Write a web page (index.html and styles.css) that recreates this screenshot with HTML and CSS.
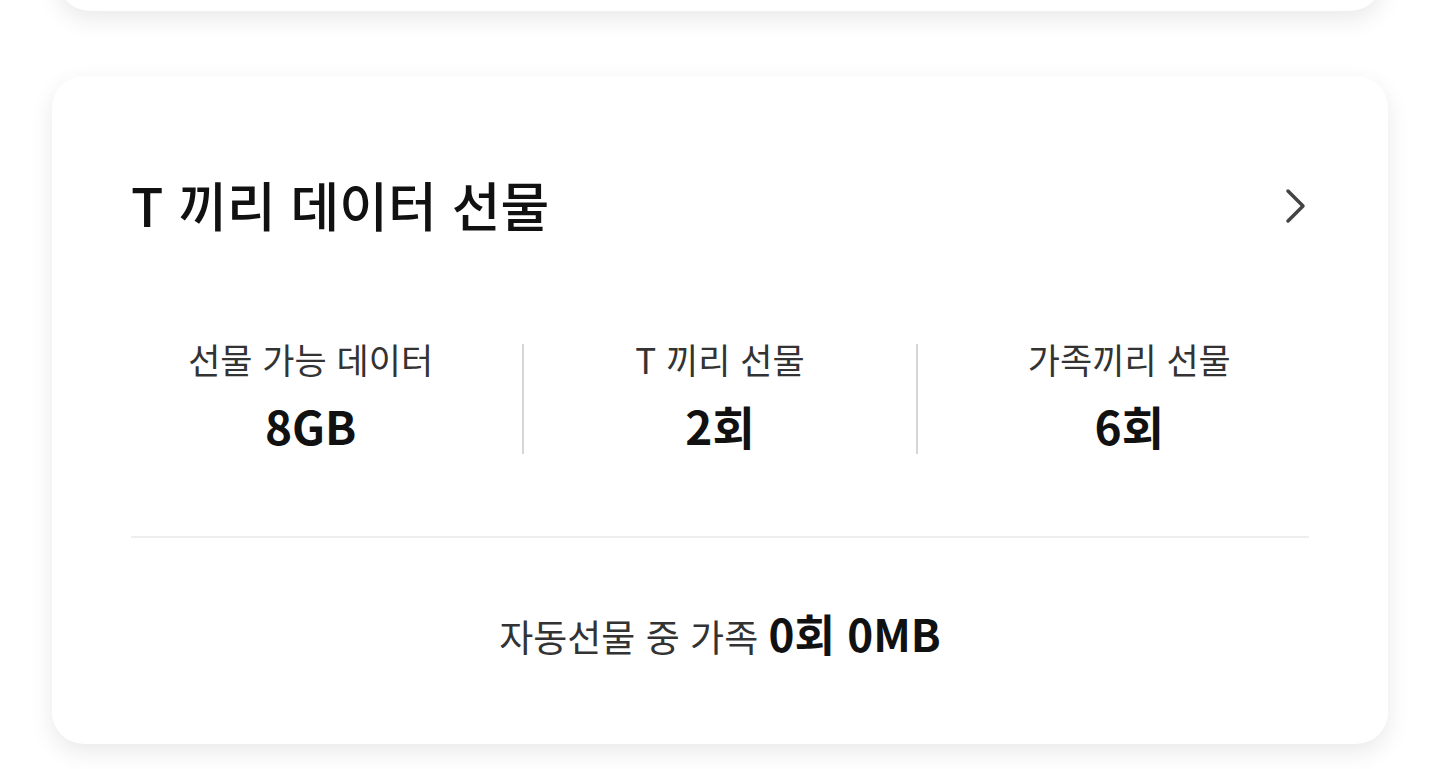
FILE: index.html
```html
<!DOCTYPE html>
<html lang="ko">
<head>
<meta charset="utf-8">
<link rel="stylesheet" href="styles.css">
</head>
<body>
<div class="page">
  <div class="card card-top"></div>
  <div class="card card-main">
    <div class="head">
      <h2 class="title">T 끼리 데이터 선물</h2>
      <svg class="chev" width="22" height="36" viewBox="0 0 22 36"><path d="M3 3 L18 18 L3 33" fill="none" stroke="#444" stroke-width="3.5" stroke-linecap="round" stroke-linejoin="round"/></svg>
    </div>
    <div class="stats">
      <div class="stat stat-first">
        <div class="label">선물 가능 데이터</div>
        <div class="value">8GB</div>
      </div>
      <div class="divider"></div>
      <div class="stat">
        <div class="label">T 끼리 선물</div>
        <div class="value">2회</div>
      </div>
      <div class="divider"></div>
      <div class="stat stat-last">
        <div class="label">가족끼리 선물</div>
        <div class="value">6회</div>
      </div>
    </div>
    <div class="rule"></div>
    <div class="auto">자동선물 중 가족 <b>0회 0MB</b></div>
  </div>
</div>
</body>
</html>
```
FILE: styles.css
```css
html, body {
  margin: 0;
  padding: 0;
  background: #fff;
}
body {
  font-family: "Noto Sans CJK KR", "Noto Sans", sans-serif;
  color: #111;
  overflow: hidden;
  height: 769px;
}
.page {
  display: flex;
  flex-direction: column;
  gap: 65px;
  padding: 0 52px;
  margin-top: -100px;
}
.card {
  background: #fff;
  border-radius: 32px;
  box-shadow: 0 8px 24px rgba(0, 0, 0, 0.09);
}
.card-top {
  height: 111px;
  margin: 0 6px;
}
.card-main {
  height: 668px;
  box-sizing: border-box;
  padding: 0 79px;
  display: flex;
  flex-direction: column;
}
.head {
  display: flex;
  align-items: center;
  justify-content: space-between;
  margin-top: 92px;
  height: 72px;
}
.title {
  margin: 0;
  font-size: 53px;
  font-weight: 500;
  color: #111;
  line-height: 72px;
}
.chev {
  margin-right: 2px;
  margin-top: 4px;
}
.stats {
  display: grid;
  grid-template-columns: 1fr 2px 1fr 2px 1fr;
  margin-top: 104px;
}
.stat {
  display: flex;
  flex-direction: column;
  align-items: center;
  min-width: 0;
}
.stat-first { padding-right: 32px; }
.stat-last { padding-left: 32px; }
.divider {
  background: #d6d6d6;
  height: 110px;
}
.label {
  font-size: 35px;
  color: #333;
  line-height: 40px;
  margin-top: -5px;
}
.value {
  font-size: 46px;
  font-weight: 700;
  color: #111;
  line-height: 50px;
  margin-top: 21px;
}
.rule {
  height: 2px;
  background: #eeeeee;
  margin-top: 82px;
}
.auto {
  text-align: center;
  font-size: 37px;
  color: #333;
  margin-top: 70px;
  line-height: 50px;
}
.auto b {
  color: #111;
  font-weight: 700;
  font-size: 44px;
}
```
